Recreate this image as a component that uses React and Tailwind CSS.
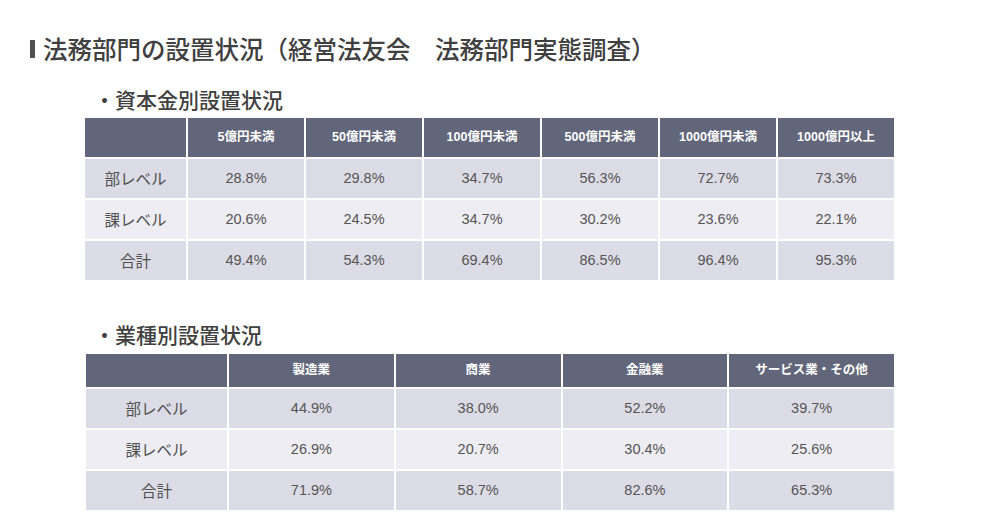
const capitalHead = ["5億円未満", "50億円未満", "100億円未満", "500億円未満", "1000億円未満", "1000億円以上"]
const capitalRows = [
    { label: "部レベル", values: ["28.8%", "29.8%", "34.7%", "56.3%", "72.7%", "73.3%"] },
    { label: "課レベル", values: ["20.6%", "24.5%", "34.7%", "30.2%", "23.6%", "22.1%"] },
    { label: "合計", values: ["49.4%", "54.3%", "69.4%", "86.5%", "96.4%", "95.3%"] },
]

const industryHead = ["製造業", "商業", "金融業", "サービス業・その他"]
const industryRows = [
    { label: "部レベル", values: ["44.9%", "38.0%", "52.2%", "39.7%"] },
    { label: "課レベル", values: ["26.9%", "20.7%", "30.4%", "25.6%"] },
    { label: "合計", values: ["71.9%", "58.7%", "82.6%", "65.3%"] },
]

const rowBg = ["bg-[#dcdce6]", "bg-[#ededf3]", "bg-[#dcdce6]"]

const Table = ({ head, rows, cols, headHeight }) => (
    <div className={`grid gap-[2px] bg-white font-['Liberation_Sans','Noto_Sans_CJK_JP',sans-serif] ${cols}`}>
        <div className={`bg-[#62667a] ${headHeight}`} />
        {head.map(h => (
            <div key={h} className={`bg-[#62667a] ${headHeight} flex items-center justify-center text-white font-bold text-[12.5px]`}>
                {h}
            </div>
        ))}
        {rows.map((row, i) => (
            <div key={row.label} className="contents">
                <div className={`${rowBg[i]} h-[39px] flex items-center justify-center text-[15.5px] text-[#505050] font-['Noto_Sans_CJK_JP',sans-serif]`}>
                    {row.label}
                </div>
                {row.values.map((v, j) => (
                    <div key={j} className={`${rowBg[i]} h-[39px] flex items-center justify-center text-[14.5px] text-[#555]`}>
                        {v}
                    </div>
                ))}
            </div>
        ))}
    </div>
)

const App = () => {
    return (
        <div className="w-[1000px] h-[529px] bg-white overflow-hidden font-['Noto_Sans_CJK_JP',sans-serif] text-[#404040]">
            <header className="flex items-center h-[28px] mt-[35px] pl-[30px] gap-[8px]">
                <span className="block shrink-0 w-[5px] h-[18px] bg-[#505050]" />
                <h1 className="text-[24.5px] leading-[28px] font-medium">法務部門の設置状況（経営法友会　法務部門実態調査）</h1>
            </header>

            <section className="pl-[85px] w-[894px]">
                <h2 className="mt-[22px] h-[28px] leading-[28px] text-[21px] font-medium pl-[9px]">・資本金別設置状況</h2>
                <div className="mt-[5px]">
                    <Table head={capitalHead} rows={capitalRows} cols="grid-cols-[101px_repeat(6,minmax(0,1fr))]" headHeight="h-[39px]" />
                </div>
            </section>

            <section className="pl-[86px] w-[894px]">
                <h2 className="mt-[40px] h-[28px] leading-[28px] text-[21px] font-medium pl-[8px]">・業種別設置状況</h2>
                <div className="mt-[6px]">
                    <Table head={industryHead} rows={industryRows} cols="grid-cols-[141px_repeat(4,minmax(0,1fr))]" headHeight="h-[33px]" />
                </div>
            </section>
        </div>
    )
}
export default App
